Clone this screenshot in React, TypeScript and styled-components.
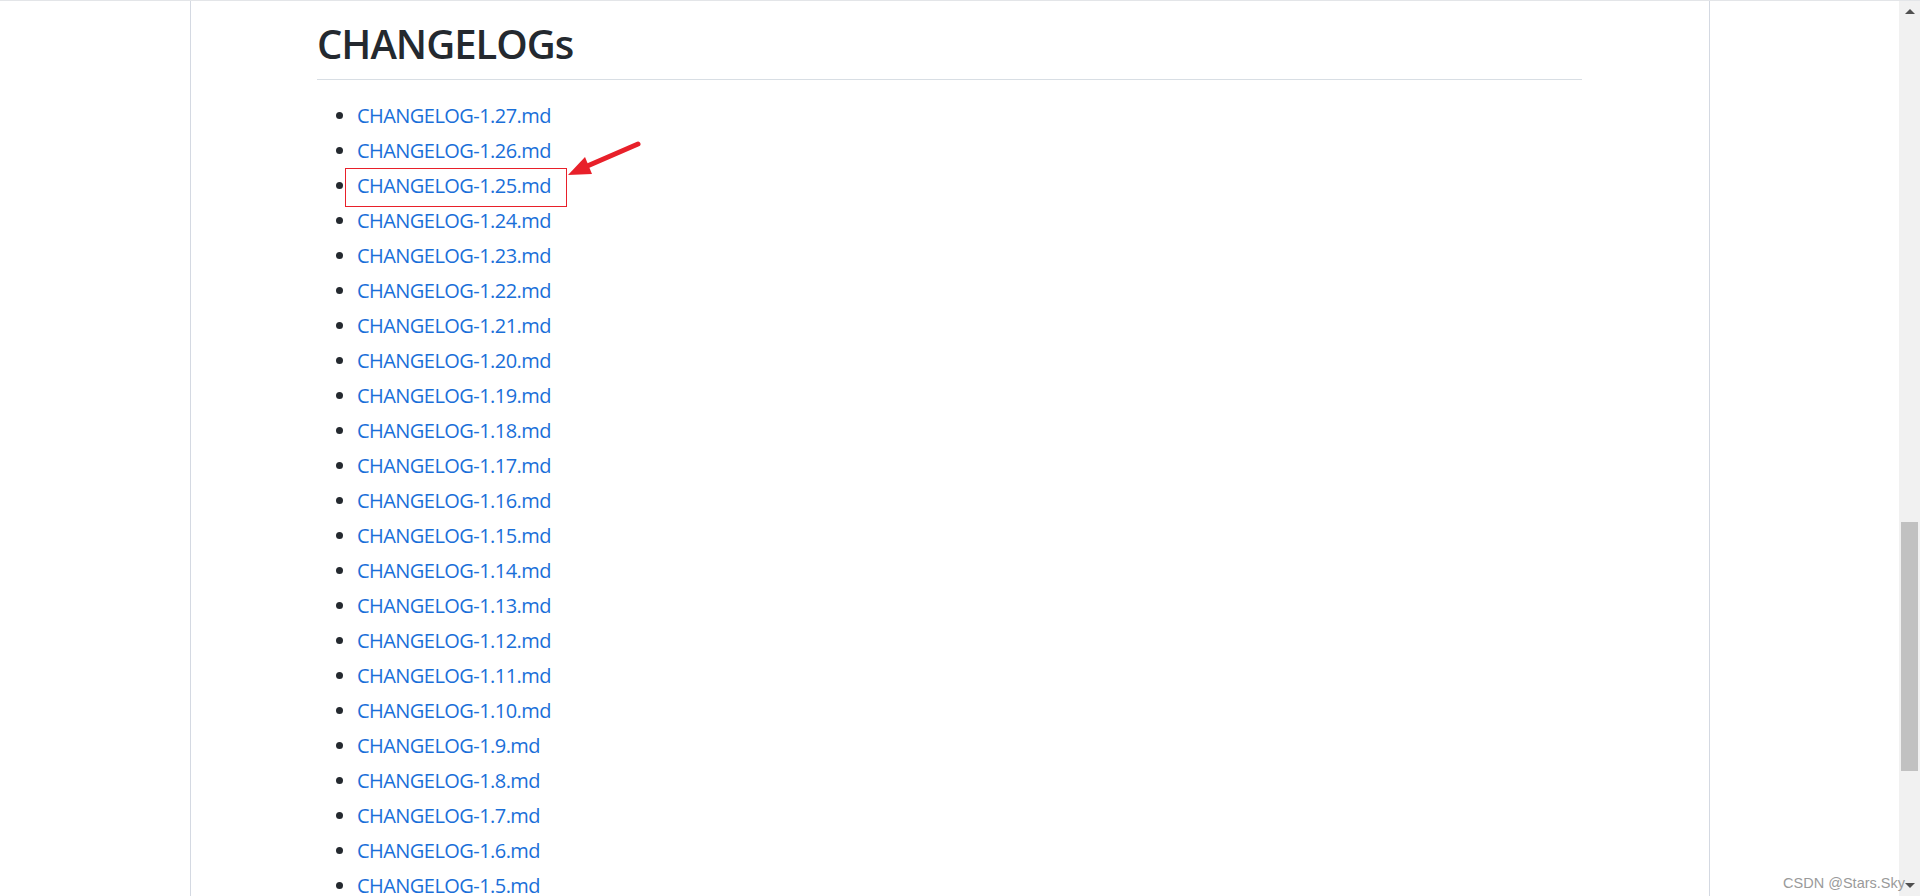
import React from 'react';
import styled, { createGlobalStyle } from 'styled-components';

const GlobalStyle = createGlobalStyle`
    html, body {
        margin: 0;
        padding: 0;
        overflow: hidden;
        background: #ffffff;
    }
`;

const Frame = styled.div`
    position: relative;
    display: flex;
    height: 896px;
    border-top: 1px solid #e3e5e8;
    box-sizing: border-box;
    font-family: "Open Sans", "Noto Sans", sans-serif;
`;

const Page = styled.div`
    flex: 1;
    overflow: hidden;
    padding-left: 190px;
`;

const Article = styled.article`
    width: 1520px;
    height: 100%;
    box-sizing: border-box;
    padding: 18px 127px 0 126px;
    border-left: 1px solid #d4d9e2;
    border-right: 1px solid #d4d9e2;
    color: #24292f;
`;

const Title = styled.h1`
    margin: 0 0 21px;
    padding-bottom: 10px;
    font-size: 40px;
    font-weight: 600;
    line-height: 1.25;
    letter-spacing: -1px;
    border-bottom: 1px solid #d8dee4;
`;

const List = styled.ul`
    margin: 0;
    padding-left: 40px;
    font-size: 20px;
    line-height: 1.5;
`;

const Item = styled.li`
    position: relative;

    & + & {
        margin-top: 5px;
    }
`;

const Link = styled.a`
    color: #1a6fd9;
    text-decoration: none;
    letter-spacing: -0.55px;
`;

const Highlight = styled.span`
    position: absolute;
    left: -12px;
    top: -3px;
    width: 222px;
    height: 39px;
    box-sizing: border-box;
    border: 1px solid #e8202a;
    pointer-events: none;
`;

const Pointer = styled.svg`
    position: absolute;
    left: 208px;
    top: -33px;
    width: 80px;
    height: 44px;
    overflow: visible;
`;

const Scrollbar = styled.div`
    width: 21px;
    display: flex;
    flex-direction: column;
    background: #f1f1f1;
`;

const ArrowButton = styled.div<{ $down?: boolean }>`
    height: 21px;
    display: flex;
    align-items: center;
    justify-content: center;

    &::before {
        content: '';
        border-left: 5px solid transparent;
        border-right: 5px solid transparent;
        ${({ $down }) => ($down ? 'border-top: 5px solid #505050;' : 'border-bottom: 5px solid #505050;')}
    }
`;

const Track = styled.div`
    flex: 1;
    padding: 0 2px;
`;

const Thumb = styled.div`
    margin-top: 500px;
    height: 249px;
    background: #c1c1c1;
`;

const Watermark = styled.div`
    position: absolute;
    right: 15px;
    bottom: 5px;
    font-family: "Liberation Sans", Arial, sans-serif;
    font-size: 14.5px;
    color: #9a9a9a;
    white-space: nowrap;
`;

const versions = Array.from({ length: 26 }, (_, i) => 27 - i);

export default function App() {
    return (
        <>
            <GlobalStyle />
            <Frame>
                <Page>
                    <Article>
                        <Title>CHANGELOGs</Title>
                        <List>
                            {versions.map((v) => (
                                <Item key={v}>
                                    <Link href="#">CHANGELOG-1.{v}.md</Link>
                                    {v === 25 && (
                                        <>
                                            <Highlight />
                                            <Pointer viewBox="0 0 80 44">
                                                <line x1="20" y1="29" x2="73" y2="6" stroke="#e8202a" strokeWidth="5" strokeLinecap="round" />
                                                <polygon points="3,37 27,36 20,19" fill="#e8202a" />
                                            </Pointer>
                                        </>
                                    )}
                                </Item>
                            ))}
                        </List>
                    </Article>
                </Page>
                <Scrollbar>
                    <ArrowButton />
                    <Track>
                        <Thumb />
                    </Track>
                    <ArrowButton $down />
                </Scrollbar>
                <Watermark>CSDN @Stars.Sky</Watermark>
            </Frame>
        </>
    );
}
